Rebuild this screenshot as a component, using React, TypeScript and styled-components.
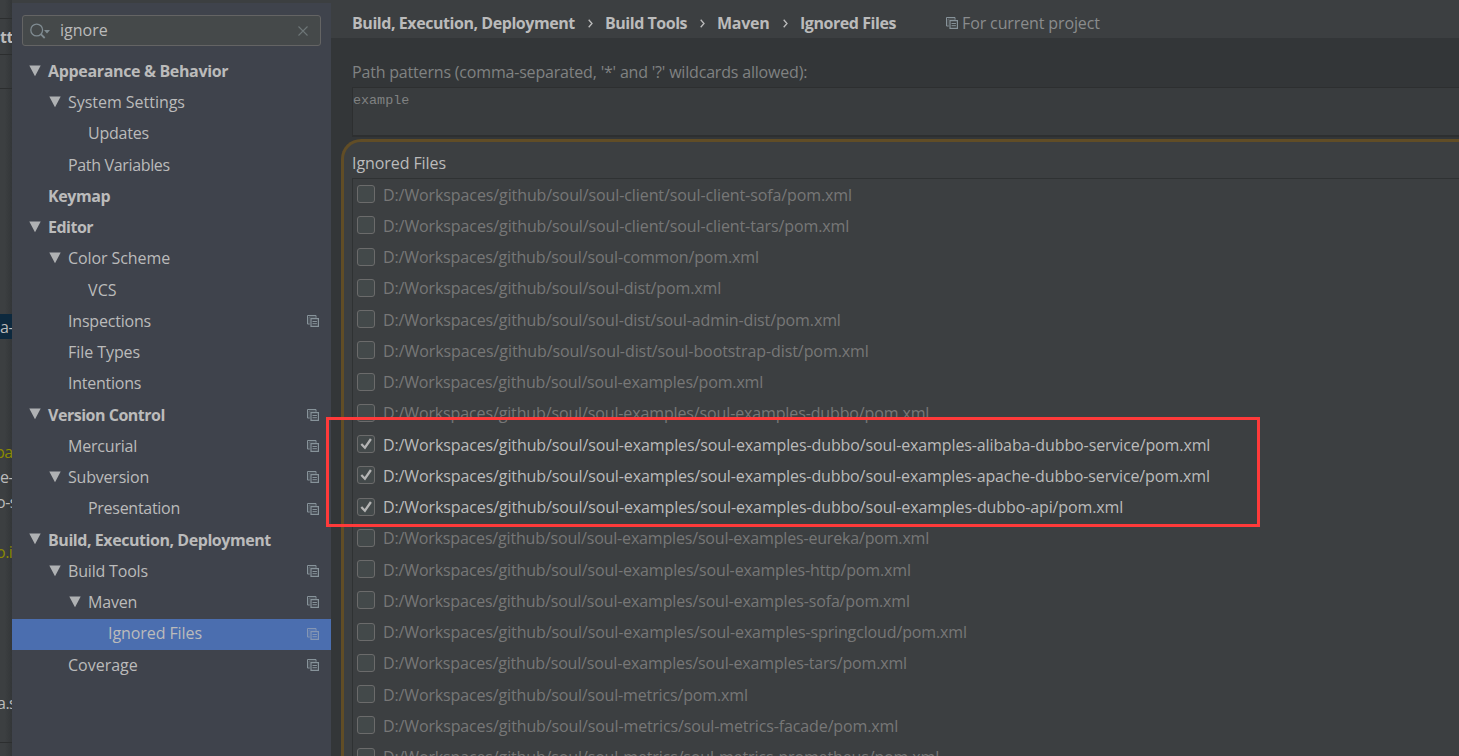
import React from "react";
import styled, { createGlobalStyle } from "styled-components";

const Global = createGlobalStyle`
  * { box-sizing: border-box; }
  body { margin: 0; background: #3c3f41; overflow: hidden; }
`;

const Window = styled.div`
  position: relative;
  display: flex;
  width: 1459px;
  height: 756px;
  overflow: hidden;
  background: #3c3f41;
  color: #bbbbbb;
  font-family: "Open Sans", "Noto Sans", sans-serif;
  font-size: 16px;
  white-space: nowrap;
`;

const EditorStrip = styled.div`
  flex: none;
  display: flex;
  flex-direction: column;
  width: 12px;
  overflow: hidden;
  background: linear-gradient(90deg, #3c3f41 40%, #333638);
`;

const StripCell = styled.div<{ $h: number; $line?: boolean; $selected?: boolean; $color?: string; $bold?: boolean; $shift?: number }>`
  flex: none;
  display: flex;
  align-items: center;
  height: ${(p) => p.$h}px;
  border-bottom: ${(p) => (p.$line ? "1px solid #2c2e2f" : "none")};
  background: ${(p) => (p.$selected ? "#0d293e" : "transparent")};
  color: ${(p) => p.$color ?? "#bbbbbb"};
  font-weight: ${(p) => (p.$bold ? 700 : 400)};
  text-indent: ${(p) => p.$shift ?? 0}px;
  letter-spacing: -0.5px;
`;

const Sidebar = styled.aside`
  flex: none;
  display: flex;
  flex-direction: column;
  width: 319px;
  margin-top: 3px;
  background: #3f434c;
`;

const SearchField = styled.div`
  flex: none;
  display: flex;
  align-items: center;
  height: 31px;
  margin: 12px 10px 10px 10px;
  padding: 0 12px 0 7px;
  border: 1px solid #646464;
  border-radius: 3px;
  background: #45494a;
`;

const SearchText = styled.span`
  flex: 1;
  margin-left: 10px;
  padding-bottom: 1px;
`;

const TreeRow = styled.div<{ $level: number; $bold?: boolean; $selected?: boolean }>`
  flex: none;
  display: flex;
  align-items: center;
  height: 31.25px;
  padding: 0 12px 0 ${(p) => 16 + p.$level * 20}px;
  background: ${(p) => (p.$selected ? "#4b6eaf" : "transparent")};
  font-weight: ${(p) => (p.$bold ? 700 : 400)};

  > svg {
    margin-bottom: 1px;
  }
`;

const ArrowSlot = styled.span`
  display: flex;
  width: 20px;
  padding: 0 0 2px 1px;
`;

const TreeLabel = styled.span<{ $spacing: number }>`
  flex: 1;
  padding-bottom: 1.5px;
  letter-spacing: ${(p) => p.$spacing}px;
`;

const Content = styled.main`
  flex: 1;
  display: flex;
  flex-direction: column;
  min-width: 0;
  background: #333638;
`;

const Breadcrumbs = styled.header`
  flex: none;
  display: flex;
  align-items: center;
  height: 38px;
  padding: 8px 0 0 21px;
  background: #3c3f41;
  font-weight: 700;
`;

const Crumb = styled.span<{ $w: number; $spacing: number }>`
  width: ${(p) => p.$w}px;
  padding-bottom: 1px;
  letter-spacing: ${(p) => p.$spacing}px;
`;

const Chevron = styled.span`
  width: 30px;
  display: flex;
  justify-content: center;
  padding-top: 1px;
`;

const Scope = styled.span`
  display: flex;
  align-items: center;
  gap: 4px;
  margin-left: 50px;
  padding-bottom: 1px;
  color: #8a8c8d;
  font-weight: 400;
  letter-spacing: -0.12px;
`;

const PatternLabel = styled.label`
  flex: none;
  height: 49px;
  padding: 22px 0 0 21px;
  color: #808282;
  line-height: 24px;
  letter-spacing: -0.185px;
`;

const PatternInput = styled.div`
  flex: none;
  height: 50px;
  margin-left: 21px;
  padding: 4px 0 0 0;
  border: 1px solid #2d2f30;
  border-right: none;
  border-bottom-width: 2px;
  background: #393c3e;
  color: #808282;
  font-family: "Liberation Mono", monospace;
  font-size: 13.4px;
  line-height: 18px;
`;

const Group = styled.section`
  flex: 1;
  display: flex;
  flex-direction: column;
  min-height: 0;
  margin: 2px 0 0 10px;
  border: 3px solid #614d26;
  border-right: none;
  border-bottom: none;
  border-top-left-radius: 20px;
  background: #3c3f41;
`;

const GroupTitle = styled.h2`
  flex: none;
  height: 36px;
  margin: 0;
  padding: 9px 0 0 8px;
  font-size: 16px;
  font-weight: 400;
  line-height: 24px;
  letter-spacing: -0.08px;
`;

const FileList = styled.div`
  flex: 1;
  min-height: 0;
  overflow: hidden;
  margin-left: 8px;
  border-left: 1px solid #2f3233;
  border-top: 1px solid #2f3233;
`;

const FileRow = styled.div<{ $checked?: boolean }>`
  display: flex;
  align-items: center;
  height: 31.25px;
  padding-left: 3.5px;
  color: ${(p) => (p.$checked ? "#bbbbbb" : "#777777")};
`;

const Box = styled.span`
  flex: none;
  display: flex;
  width: 18px;
  height: 18px;
  margin: 0 8.5px 1px 0;
  border: 1px solid #6b6b6b;
  border-radius: 3px;
  background: #43494a;
`;

const Path = styled.span<{ $spacing: number }>`
  letter-spacing: ${(p) => p.$spacing}px;
`;

const Highlight = styled.div`
  position: absolute;
  left: 326px;
  top: 417px;
  width: 934px;
  height: 110px;
  border: 3px solid #ff3a3a;
`;

const Arrow = () => (
  <svg width="12" height="12" viewBox="0 0 12 12">
    <path d="M0.3 0.5h11.4L6 11.3z" fill="#afb1b3" />
  </svg>
);

const CopyIcon = ({ color = "#87939a" }: { color?: string }) => (
  <svg width="12" height="12" viewBox="0 0 12 12" fill="none" stroke={color}>
    <path d="M2.8 9H0.5V0.5H9V2.8" />
    <path d="M2 8.5V2H8.5" opacity="0.45" />
    <path d="M4 3.7H11.4V11.4H4z" strokeWidth="1.2" />
    <path d="M5.5 6.5h4.4M5.5 8.7h4.4" />
  </svg>
);

const SearchIcon = () => (
  <svg width="20" height="16" viewBox="0 0 20 16" fill="none">
    <circle cx="6.7" cy="7" r="5.9" stroke="#7f8b91" strokeWidth="1.3" />
    <path d="M10.8 11.1l3.9 3.9" stroke="#7f8b91" strokeWidth="1.8" />
    <path d="M14 7h6l-3 3.6z" fill="#7f8b91" />
  </svg>
);

const ClearIcon = () => (
  <svg width="10" height="10" viewBox="0 0 10 10">
    <path d="M0.5 0.5l9 9M9.5 0.5l-9 9" stroke="#6e7678" strokeWidth="1.1" />
  </svg>
);

const Check = () => (
  <svg width="16" height="16" viewBox="0 0 16 16" fill="none">
    <path d="M3.3 8l3.6 3.7L12.9 3" stroke="#b4b4b4" strokeWidth="2.3" />
  </svg>
);

const ChevronIcon = () => (
  <svg width="5" height="9" viewBox="0 0 5 9" fill="none">
    <path d="M0.7 0.7L4 4.5L0.7 8.3" stroke="#bbbbbb" strokeWidth="1.3" />
  </svg>
);

type Node = { label: string; level: number; open?: boolean; bold?: boolean; copy?: boolean; selected?: boolean; spacing: number };

const tree: Node[] = [
  { label: "Appearance & Behavior", level: 0, open: true, bold: true, spacing: -0.34 },
  { label: "System Settings", level: 1, open: true, spacing: -0.03 },
  { label: "Updates", level: 2, spacing: -0.22 },
  { label: "Path Variables", level: 1, spacing: -0.34 },
  { label: "Keymap", level: 0, bold: true, spacing: -0.4 },
  { label: "Editor", level: 0, open: true, bold: true, spacing: -0.5 },
  { label: "Color Scheme", level: 1, open: true, spacing: -0.08 },
  { label: "VCS", level: 2, spacing: 0.1 },
  { label: "Inspections", level: 1, copy: true, spacing: -0.2 },
  { label: "File Types", level: 1, spacing: -0.06 },
  { label: "Intentions", level: 1, spacing: -0.25 },
  { label: "Version Control", level: 0, open: true, bold: true, copy: true, spacing: -0.48 },
  { label: "Mercurial", level: 1, copy: true, spacing: -0.2 },
  { label: "Subversion", level: 1, open: true, copy: true, spacing: -0.2 },
  { label: "Presentation", level: 2, copy: true, spacing: -0.28 },
  { label: "Build, Execution, Deployment", level: 0, open: true, bold: true, spacing: -0.44 },
  { label: "Build Tools", level: 1, open: true, copy: true, spacing: -0.18 },
  { label: "Maven", level: 2, open: true, copy: true, spacing: -0.2 },
  { label: "Ignored Files", level: 3, copy: true, selected: true, spacing: -0.08 },
  { label: "Coverage", level: 1, copy: true, spacing: 0 },
];

const root = "D:/Workspaces/github/soul/";
const files: { path: string; checked?: boolean; spacing: number }[] = [
  { path: "soul-client/soul-client-sofa/pom.xml", spacing: -0.1 },
  { path: "soul-client/soul-client-tars/pom.xml", spacing: -0.1 },
  { path: "soul-common/pom.xml", spacing: -0.144 },
  { path: "soul-dist/pom.xml", spacing: -0.115 },
  { path: "soul-dist/soul-admin-dist/pom.xml", spacing: -0.12 },
  { path: "soul-dist/soul-bootstrap-dist/pom.xml", spacing: -0.08 },
  { path: "soul-examples/pom.xml", spacing: -0.155 },
  { path: "soul-examples/soul-examples-dubbo/pom.xml", spacing: -0.13 },
  { path: "soul-examples/soul-examples-dubbo/soul-examples-alibaba-dubbo-service/pom.xml", checked: true, spacing: -0.114 },
  { path: "soul-examples/soul-examples-dubbo/soul-examples-apache-dubbo-service/pom.xml", checked: true, spacing: -0.116 },
  { path: "soul-examples/soul-examples-dubbo/soul-examples-dubbo-api/pom.xml", checked: true, spacing: -0.112 },
  { path: "soul-examples/soul-examples-eureka/pom.xml", spacing: -0.172 },
  { path: "soul-examples/soul-examples-http/pom.xml", spacing: -0.142 },
  { path: "soul-examples/soul-examples-sofa/pom.xml", spacing: -0.165 },
  { path: "soul-examples/soul-examples-springcloud/pom.xml", spacing: -0.133 },
  { path: "soul-examples/soul-examples-tars/pom.xml", spacing: -0.167 },
  { path: "soul-metrics/pom.xml", spacing: -0.139 },
  { path: "soul-metrics/soul-metrics-facade/pom.xml", spacing: -0.127 },
  { path: "soul-metrics/soul-metrics-prometheus/pom.xml", spacing: -0.135 },
];

export default function App() {
  return (
    <Window>
      <Global />
      <EditorStrip>
        <StripCell $h={19} $line />
        <StripCell $h={36} $line $bold>tt</StripCell>
        <StripCell $h={34} $line />
        <StripCell $h={225} />
        <StripCell $h={25} $selected>a-</StripCell>
        <StripCell $h={100} />
        <StripCell $h={25} $color="#8a8a00" $shift={-5}>pa</StripCell>
        <StripCell $h={25}>e-</StripCell>
        <StripCell $h={25} $shift={-4}>o-s</StripCell>
        <StripCell $h={25} />
        <StripCell $h={25} $color="#8a8a00" $shift={-4}>o.i</StripCell>
        <StripCell $h={126} />
        <StripCell $h={25} $shift={-3}>a.s</StripCell>
        <StripCell $h={28} $line />
      </EditorStrip>
      <Sidebar>
        <SearchField>
          <SearchIcon />
          <SearchText>ignore</SearchText>
          <ClearIcon />
        </SearchField>
        {tree.map((n) => (
          <TreeRow key={n.label} $level={n.level} $bold={n.bold} $selected={n.selected}>
            <ArrowSlot>{n.open && <Arrow />}</ArrowSlot>
            <TreeLabel $spacing={n.spacing}>{n.label}</TreeLabel>
            {n.copy && <CopyIcon color={n.selected ? "#8496b4" : undefined} />}
          </TreeRow>
        ))}
      </Sidebar>
      <Content>
        <Breadcrumbs>
          <Crumb $w={223} $spacing={-0.44}>Build, Execution, Deployment</Crumb>
          <Chevron><ChevronIcon /></Chevron>
          <Crumb $w={82} $spacing={-0.47}>Build Tools</Crumb>
          <Chevron><ChevronIcon /></Chevron>
          <Crumb $w={53} $spacing={-0.25}>Maven</Crumb>
          <Chevron><ChevronIcon /></Chevron>
          <Crumb $w={96} $spacing={-0.44}>Ignored Files</Crumb>
          <Scope><CopyIcon />For current project</Scope>
        </Breadcrumbs>
        <PatternLabel>Path patterns (comma-separated, '*' and '?' wildcards allowed):</PatternLabel>
        <PatternInput>example</PatternInput>
        <Group>
          <GroupTitle>Ignored Files</GroupTitle>
          <FileList>
            {files.map((f) => (
              <FileRow key={f.path} $checked={f.checked}>
                <Box>{f.checked && <Check />}</Box>
                <Path $spacing={f.spacing}>{root + f.path}</Path>
              </FileRow>
            ))}
          </FileList>
        </Group>
      </Content>
      <Highlight />
    </Window>
  );
}
